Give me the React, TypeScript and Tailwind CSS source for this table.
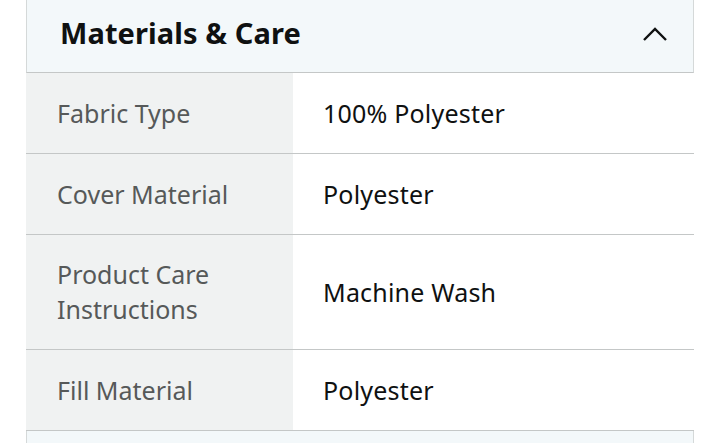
import React from "react";

// Materials & Care accordion, expanded
const rows = [
  { label: "Fabric Type", value: "100% Polyester" },
  { label: "Cover Material", value: "Polyester" },
  { label: "Product Care Instructions", value: "Machine Wash" },
  { label: "Fill Material", value: "Polyester" },
];

export default function App() {
  return (
    <div
      className="w-[719px] h-[443px] bg-white overflow-hidden"
      style={{ fontFamily: '"Noto Sans", "Open Sans", Arial, sans-serif' }}
    >
      <div className="ml-[26px] w-[668px]">
        {/* Header */}
        <div className="h-[73px] flex items-center justify-between bg-[#f3f8fa] border-x border-b border-[#d5d9d9] border-b-[#c4c7c7] pl-[33px] pr-[25px]">
          <span className="text-[29px] font-bold text-[#0f1111] leading-none -mt-[7px] tracking-[0.1px]">
            Materials &amp; Care
          </span>
          <svg width="26" height="16" viewBox="0 0 26 16" className="-mt-[4px]">
            <path d="M2 14 L13 3 L24 14" fill="none" stroke="#0f1111" strokeWidth="2.4" />
          </svg>
        </div>

        {/* Rows */}
        {rows.map((row) => (
          <div key={row.label} className="flex min-h-[81px] border-b border-[#c4c7c7]">
            <div className="w-[267px] shrink-0 flex items-center bg-[#f0f2f2] pl-[31px] pr-4 pt-[22px] pb-[22px] text-[25px] leading-[35px] text-[#565959]">
              {row.label === "Product Care Instructions" ? (
                <span>
                  Product Care
                  <br />
                  Instructions
                </span>
              ) : (
                <span>{row.label}</span>
              )}
            </div>
            <div className="flex-1 flex items-center pl-[30px] text-[25px] leading-[35px] text-[#0f1111] tracking-[0.2px]">
              {row.value}
            </div>
          </div>
        ))}

        {/* Next section header peeking */}
        <div className="h-[40px] bg-[#f3f8fa] border-x border-[#d5d9d9]" />
      </div>
    </div>
  );
}
